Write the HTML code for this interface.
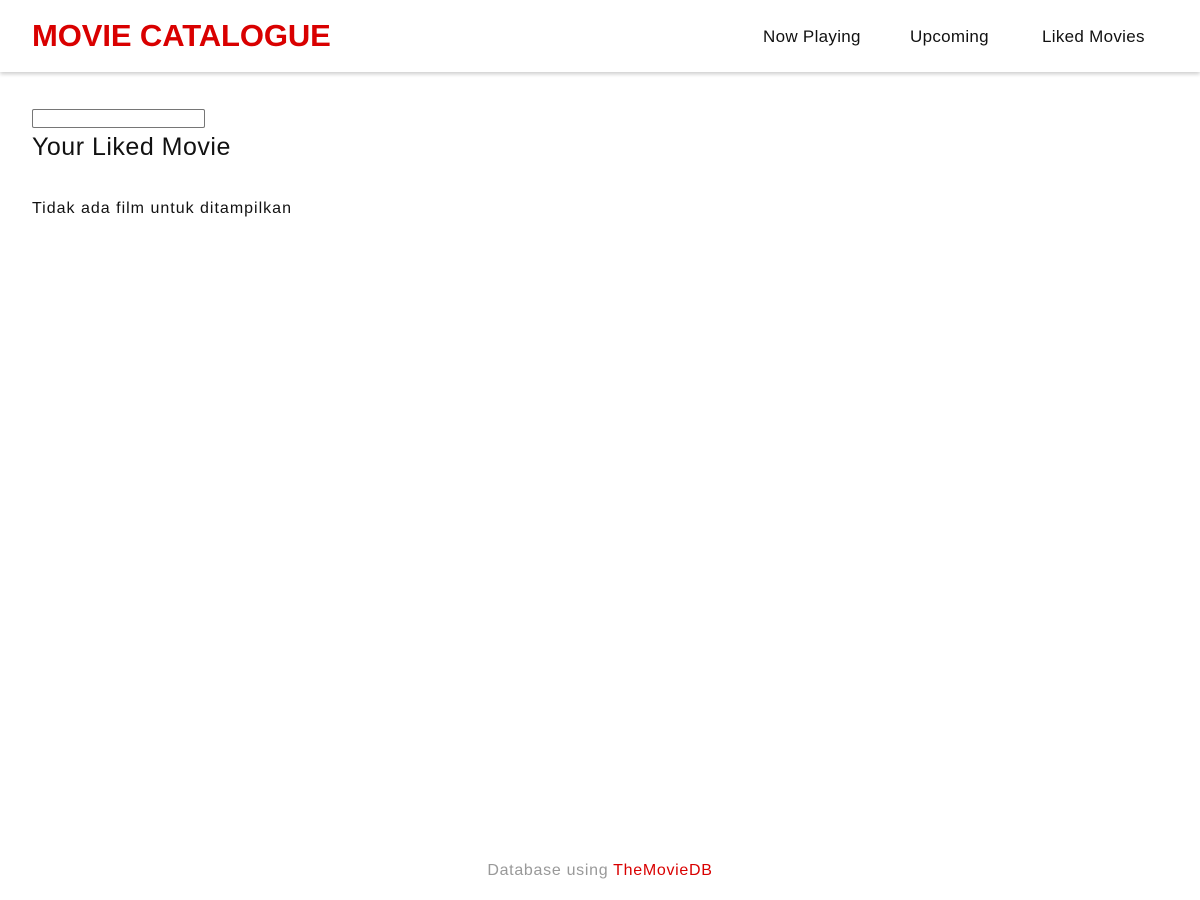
<!DOCTYPE html>
<html><head><meta charset="utf-8"><style>
body{margin:0;font-family:"Liberation Sans",sans-serif;background:#fff;width:1200px;height:900px;position:relative;overflow:hidden}
header{height:72px;box-shadow:0 2px 4px rgba(0,0,0,.2);position:relative}
.logo{position:absolute;left:32px;top:18px;font-size:31px;font-weight:bold;color:#d90000;letter-spacing:-0.1px;white-space:nowrap}
.nav a{position:absolute;top:27px;font-size:17px;color:#111;text-decoration:none;white-space:nowrap;letter-spacing:0.3px}
input{position:absolute;left:32px;top:109px;width:171px;height:17px;border:1px solid #767676;border-radius:2px;padding:0;margin:0;box-sizing:border-box;width:173px;height:19px}
h2{position:absolute;left:32px;top:133px;margin:0;font-weight:normal;font-size:25px;letter-spacing:0.5px;color:#111}
p{position:absolute;left:32px;top:200px;margin:0;font-size:16px;letter-spacing:1px;color:#111}
footer{position:absolute;top:862px;width:100%;text-align:center;font-size:16px;letter-spacing:0.7px;color:#999}
footer span{color:#d90000}
</style></head><body>
<header><div class="logo">MOVIE CATALOGUE</div>
<div class="nav"><a style="left:763px">Now Playing</a><a style="left:910px">Upcoming</a><a style="left:1042px">Liked Movies</a></div></header>
<input type="text">
<h2>Your Liked Movie</h2>
<p>Tidak ada film untuk ditampilkan</p>
<footer>Database using <span>TheMovieDB</span></footer>
</body></html>
